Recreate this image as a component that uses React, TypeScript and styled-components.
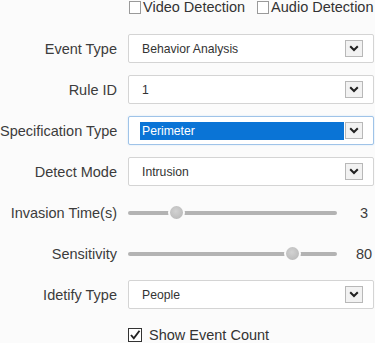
import React from 'react';
import styled, { createGlobalStyle } from 'styled-components';

const Global = createGlobalStyle`
  html, body {
    margin: 0;
    padding: 0;
    background: #fbfbfb;
    font-family: "Liberation Sans", Arial, sans-serif;
    color: #333;
  }
`;

const Page = styled.div`
  width: 375px;
  height: 343px;
  overflow: hidden;
  display: flex;
  flex-direction: column;
  gap: 12px;
`;

const CheckRow = styled.div<{ $bottom?: boolean }>`
  display: flex;
  align-items: center;
  gap: 12px;
  height: 16px;
  padding-left: ${(p) => (p.$bottom ? 128 : 129)}px;
  margin-top: ${(p) => (p.$bottom ? 6 : -1)}px;
  margin-bottom: ${(p) => (p.$bottom ? 0 : 7)}px;
  font-size: 14.5px;
  line-height: 16px;
`;

const Check = styled.label`
  display: flex;
  align-items: center;
  gap: 2px;
  white-space: nowrap;
`;

const Box = styled.span<{ $checked?: boolean }>`
  width: ${(p) => (p.$checked ? 12 : 10)}px;
  height: ${(p) => (p.$checked ? 12 : 11)}px;
  border: 1px solid ${(p) => (p.$checked ? '#333' : '#9a9a9a')};
  background: #fff;
  display: flex;
  align-items: center;
  justify-content: center;
  margin-right: ${(p) => (p.$checked ? 5 : 0)}px;
`;

const Row = styled.div`
  display: flex;
  align-items: center;
  height: 29px;
`;

const Label = styled.div`
  width: 117px;
  flex-shrink: 0;
  text-align: right;
  font-size: 14.5px;
  color: #3c3c3c;
  white-space: nowrap;
  margin-right: 11px;
`;

const Select = styled.div<{ $focus?: boolean }>`
  flex: 1;
  height: 29px;
  box-sizing: border-box;
  margin-right: 1px;
  background: #fff;
  border: 1px solid ${(p) => (p.$focus ? '#9fc3e8' : '#d4d4d4')};
  box-shadow: ${(p) => (p.$focus ? '0 0 2px #cfe2f5' : 'none')};
  border-radius: 2px;
  display: flex;
  align-items: center;
  padding: 0 10px 0 11px;
  font-size: 12.2px;
`;

const Value = styled.span<{ $selected?: boolean }>`
  flex: 1;
  height: 18px;
  line-height: 18px;
  padding-left: 2px;
  margin-right: 1px;
  background: ${(p) => (p.$selected ? '#0a74d6' : 'transparent')};
  color: ${(p) => (p.$selected ? '#fff' : '#333')};
`;

const Arrow = styled.span`
  width: 18px;
  height: 17px;
  box-sizing: border-box;
  border: 1px solid #b8b8b8;
  background: #f2f2f2;
  display: flex;
  align-items: center;
  justify-content: center;
`;

const Track = styled.div`
  position: relative;
  flex: 1;
  height: 4px;
  background: #b3b3b3;
  border-radius: 2px;
`;

const Thumb = styled.span`
  position: absolute;
  top: 50%;
  width: 13px;
  height: 13px;
  margin: -8.5px 0 0 -8.5px;
  border-radius: 50%;
  border: 2px solid #fbfbfb;
  background: radial-gradient(circle at 45% 40%, #d2d2d2, #b4b4b4);
`;

const Num = styled.span`
  width: 22px;
  margin-left: 16px;
  text-align: center;
  font-size: 14.5px;
  color: #3c3c3c;
`;

const Chevron = () => (
  <svg width="10" height="7" viewBox="0 0 10 7">
    <path d="M1.2 1.2l3.8 3.8 3.8-3.8" fill="none" stroke="#222" strokeWidth="2" />
  </svg>
);

const Tick = () => (
  <svg width="12" height="12" viewBox="0 0 12 12">
    <path d="M2 6l2.8 3.3L10.5 1.8" fill="none" stroke="#222" strokeWidth="1.9" />
  </svg>
);

const Dropdown: React.FC<{ value: string; focus?: boolean }> = ({ value, focus }) => (
  <Select $focus={focus}>
    <Value $selected={focus}>{value}</Value>
    <Arrow>
      <Chevron />
    </Arrow>
  </Select>
);

const Slider: React.FC<{ value: number; min: number; max: number }> = ({ value, min, max }) => {
  const pct = (value - min) / (max - min);
  return (
    <>
      <Track>
        <Thumb style={{ left: `calc(4px + ${pct} * (100% - 8px))` }} />
      </Track>
      <Num>{value}</Num>
    </>
  );
};

const App: React.FC = () => (
  <Page>
    <Global />
    <CheckRow>
      <Check>
        <Box />
        Video Detection
      </Check>
      <Check>
        <Box />
        Audio Detection
      </Check>
    </CheckRow>
    <Row>
      <Label>Event Type</Label>
      <Dropdown value="Behavior Analysis" />
    </Row>
    <Row>
      <Label>Rule ID</Label>
      <Dropdown value="1" />
    </Row>
    <Row>
      <Label>Specification Type</Label>
      <Dropdown value="Perimeter" focus />
    </Row>
    <Row>
      <Label>Detect Mode</Label>
      <Dropdown value="Intrusion" />
    </Row>
    <Row>
      <Label>Invasion Time(s)</Label>
      <Slider value={3} min={1} max={10} />
    </Row>
    <Row>
      <Label>Sensitivity</Label>
      <Slider value={80} min={0} max={100} />
    </Row>
    <Row>
      <Label>Idetify Type</Label>
      <Dropdown value="People" />
    </Row>
    <CheckRow $bottom>
      <Check>
        <Box $checked>
          <Tick />
        </Box>
        Show Event Count
      </Check>
    </CheckRow>
  </Page>
);

export default App;
